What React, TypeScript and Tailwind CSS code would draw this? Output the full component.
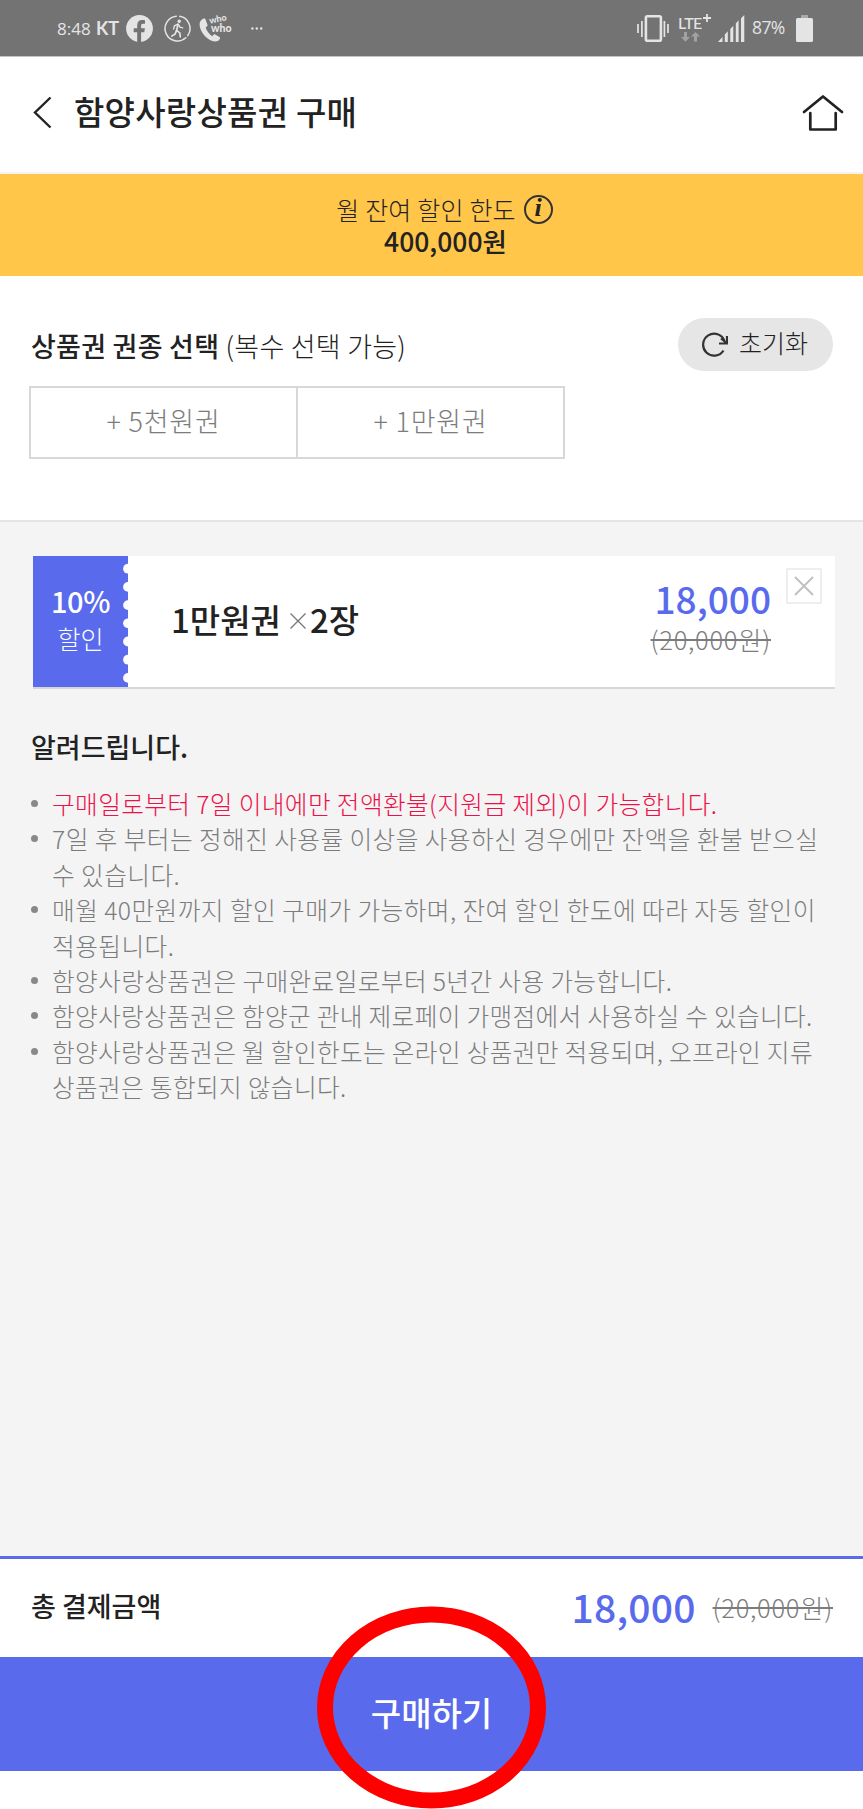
import type { ReactNode } from 'react';

type Notice = { lines: string[]; tracking: string; highlight?: boolean };

const notices: Notice[] = [
  { lines: ['구매일로부터 7일 이내에만 전액환불(지원금 제외)이 가능합니다.'], tracking: 'tracking-[0.36px]', highlight: true },
  { lines: ['7일 후 부터는 정해진 사용률 이상을 사용하신 경우에만 잔액을 환불 받으실', '수 있습니다.'], tracking: 'tracking-[0.42px]' },
  { lines: ['매월 40만원까지 할인 구매가 가능하며, 잔여 할인 한도에 따라 자동 할인이', '적용됩니다.'], tracking: 'tracking-[0.43px]' },
  { lines: ['함양사랑상품권은 구매완료일로부터 5년간 사용 가능합니다.'], tracking: 'tracking-[0.36px]' },
  { lines: ['함양사랑상품권은 함양군 관내 제로페이 가맹점에서 사용하실 수 있습니다.'], tracking: 'tracking-[0.31px]' },
  { lines: ['함양사랑상품권은 월 할인한도는 온라인 상품권만 적용되며, 오프라인 지류', '상품권은 통합되지 않습니다.'], tracking: 'tracking-[0.32px]' },
];

function StatusBar() {
  return (
    <div className="flex h-14 items-center bg-[#737373] pl-[57px] pr-[50px] text-[#e4e4e4]">
      <span className="w-[39px] whitespace-nowrap font-['Open_Sans',sans-serif] text-[17px] leading-none">8:48</span>
      <span className="w-[30px] font-['Lato',sans-serif] text-[18px] font-bold leading-none">KT</span>
      <svg width="27" height="27" viewBox="0 0 27 27" className="shrink-0">
        <circle cx="13.5" cy="13.5" r="13.4" fill="#e4e4e4" />
        <path d="M11.2 26.9v-9.6H7.7v-4h3.5v-3.1c0-3.3 2-5.1 4.9-5.1 1.4 0 2.5.2 2.9.3v3.4h-1.9c-1.6 0-2 .9-2 1.9v2.6h3.8l-.6 4h-3.2v9.6z" fill="#737373" />
      </svg>
      <svg width="27" height="27" viewBox="0 0 27 27" fill="none" stroke="#e4e4e4" strokeLinecap="round" className="ml-[11px] shrink-0">
        <path d="M15.8 1.3a12.4 12.4 0 0 1 8 19.3M21.8 22.7A12.4 12.4 0 1 1 12.2 1.2" strokeWidth="1.5" />
        <circle cx="15.2" cy="6.3" r="1.7" fill="#e4e4e4" stroke="none" />
        <path d="M14 9.3l-1.3 6 3.2 2.8.3 3.7M12.4 15.5l-1.2 3.4-3.4 2.2" strokeWidth="1.7" />
        <path d="M14 9.2l-3.6 1.6-.8 3.2M14.4 9.4l1.5 2.7 2.8.7" strokeWidth="1.3" />
      </svg>
      <div className="relative ml-2 h-[27px] w-8 shrink-0">
        <svg width="22" height="24" viewBox="0 0 22 24" className="absolute left-0 top-[3px]">
          <path d="M4.8.4C2 1.4.3 3.7.6 7c.6 8 8.3 15.8 15.2 16.5 2.6.2 4.6-1.1 5.2-3.3.2-.6 0-1-.5-1.3l-4.3-2.5c-.5-.3-1-.2-1.4.2l-1.6 1.6C10.3 16.5 7.5 12.8 6.7 9.6l1.5-1.5c.4-.4.5-.9.3-1.4L6.3 1C6 .5 5.4.2 4.8.4z" fill="#e4e4e4" />
        </svg>
        <span className="absolute left-[10px] top-[-1px] -rotate-12 font-['Lato',sans-serif] text-[9px] font-black leading-[9px]">who</span>
        <span className="absolute left-[12px] top-[8px] font-['Lato',sans-serif] text-[10.5px] font-black leading-[10px]">who</span>
      </div>
      <svg width="12" height="3" viewBox="0 0 12 3" fill="#e4e4e4" className="ml-5 shrink-0">
        <circle cx="1.4" cy="1.5" r="1.2" /><circle cx="5.8" cy="1.5" r="1.2" /><circle cx="10.2" cy="1.5" r="1.2" />
      </svg>
      <div className="ml-auto flex items-center">
        <svg width="32" height="27" viewBox="0 0 32 27" fill="none" stroke="#e4e4e4" className="shrink-0">
          <rect x="8.9" y="1.3" width="15" height="24.4" rx="1.5" strokeWidth="2.6" />
          <path d="M1 9v9M4.900 6v16M27.400 6v16M31 9v9" strokeWidth="1.7" />
        </svg>
        <div className="relative ml-[10px] h-[27px] w-8 shrink-0">
          <span className="absolute left-[-1px] top-0 font-['Lato',sans-serif] text-[16px] font-medium leading-none tracking-[-0.6px]">LTE</span>
          <svg width="8" height="8" viewBox="0 0 8 8" stroke="#e4e4e4" strokeWidth="1.8" className="absolute left-[24px] top-[-1px]">
            <path d="M4 0v8M0 4h8" />
          </svg>
          <svg width="19" height="10" viewBox="0 0 19 10" fill="#a2a2a2" className="absolute left-[2px] top-[17px]">
            <path d="M3 0h3v5h3L4.5 9.7 0 5h3zM13 9.5h3v-5h3L14.5 0 10 4.5h3z" />
          </svg>
        </div>
        <svg width="27" height="27" viewBox="0 0 27 27" fill="#e4e4e4" className="ml-[7px] shrink-0">
          <path d="M0 27l4.5-5v5zM6.8 27v-7.5l3-3.2V27zM12.3 27V14l3-3.2V27zM17.8 27V8.4l2.8-3.2V27zM23 27V3.2L26.3 0v27z" />
        </svg>
        <span className="ml-[7px] w-9 whitespace-nowrap font-['Open_Sans',sans-serif] text-[17.5px] leading-none tracking-[-0.6px]">87%</span>
        <svg width="17" height="27" viewBox="0 0 17 27" className="ml-2 shrink-0">
          <path d="M5 0h7v3H5z" fill="#aaa" /><rect y="3" width="17" height="24" rx="1.5" fill="#e4e4e4" />
        </svg>
      </div>
    </div>
  );
}

function TopBar() {
  return (
    <header className="flex h-[118px] items-center border-b-2 border-t border-b-[#f3f3f3] border-t-[#c4c4c4] bg-white pb-1 pl-[33px] pr-[19px]">
      <svg width="19" height="33" viewBox="0 0 19 33" fill="none" stroke="#222" strokeWidth="2.4" className="shrink-0">
        <path d="M17.5 1.5L2 16.5l15.5 15" />
      </svg>
      <h1 className="ml-[22px] pb-1 text-[33px] font-medium leading-[48px] tracking-[0.25px]">함양사랑상품권 구매</h1>
      <svg width="42" height="38" viewBox="0 0 42 38" fill="none" stroke="#222" strokeWidth="2.7" strokeLinecap="round" strokeLinejoin="round" className="ml-auto shrink-0">
        <path d="M2 18L21 2.5 40 18M8.3 19v16.5h25.4V19" />
      </svg>
    </header>
  );
}

function AmountButton({ children }: { children: ReactNode }) {
  return (
    <button className="-ml-[2px] h-[73px] w-[269px] border-2 border-[#d8d8d8] bg-white pb-[3px] text-[27px] font-light tracking-[0.8px] text-[#7c7c7c]">{children}</button>
  );
}

function Coupon() {
  return (
    <article className="ml-[33px] mr-[28px] mt-[34px] flex h-[133px] border-b-2 border-[#d6d6d6] bg-white">
      <div className="flex w-[95px] shrink-0 bg-[#596bec] text-white">
        <div className="flex flex-1 flex-col items-center pt-[24px]">
          <span className="text-[29px] font-medium leading-[40px] tracking-[-0.4px]">10%</span>
          <span className="text-[25px] font-light leading-[36px]">할인</span>
        </div>
        <svg width="5" height="131" viewBox="0 0 5 131" fill="#fff" className="-ml-[5px] shrink-0">
          {[12.7, 30.9, 49.1, 67.3, 85.5, 103.7, 121.9].map((y) => <circle key={y} cx="5" cy={y} r="4.9" />)}
        </svg>
      </div>
      <div className="flex flex-1 items-center pb-[6px] pl-[43px] text-[33px] font-medium leading-[48px]">
        <span>1만원권</span>
        <svg width="16" height="16" viewBox="0 0 16 16" stroke="#777" strokeWidth="1.3" className="ml-[9px] mr-[4px] mt-[5px]"><path d="M.5.5l15 15m0-15l-15 15" /></svg>
        <span>2장</span>
      </div>
      <div className="flex flex-col items-end pt-[16px]">
        <span className="text-[37px] font-medium leading-[52px] text-[#596bec]">18,000</span>
        <s className="text-[25.5px] font-light leading-[29px] tracking-[0.7px] text-[#7c7c7c] decoration-2">(20,000원)</s>
      </div>
      <button className="ml-[15px] mr-[13px] mt-3 flex h-9 w-9 items-center justify-center border-2 border-[#eee]">
        <svg width="20" height="20" viewBox="0 0 20 20" stroke="#bfbfbf" strokeWidth="1.8"><path d="M1 1l18 18M19 1L1 19" /></svg>
      </button>
    </article>
  );
}

export default function App() {
  return (
    <div className="flex h-[1809px] w-[863px] flex-col overflow-hidden bg-white font-['Noto_Sans_CJK_KR',sans-serif] text-[#222]">
      <StatusBar />
      <TopBar />
      <section className="flex h-[102px] flex-col items-center bg-[#ffc64a] pt-[17px]">
        <div className="ml-[26px] flex items-center text-[25px] font-light leading-[36px] tracking-[0.2px]">
          월 잔여 할인 한도
          <span className="ml-2 flex h-[29px] w-[29px] items-center justify-center rounded-full border-2 border-[#333] pb-[2px] font-['Liberation_Serif',serif] text-[26px] font-bold italic leading-none">i</span>
        </div>
        <strong className="ml-[28px] text-[26.5px] font-medium leading-[28px]">400,000원</strong>
      </section>
      <section className="h-[246px] shrink-0 border-b-2 border-[#e5e5e5] bg-white px-[30px] pt-[42px]">
        <div className="flex items-start justify-between">
          <h2 className="mt-[8px] pl-[1px] text-[27px] font-medium leading-[40px] tracking-[0.25px]">상품권 권종 선택 <span className="font-light">(복수 선택 가능)</span></h2>
          <button className="flex h-[53px] w-[155px] items-center rounded-full bg-[#e6e6e6] pl-[24px] text-[25px] font-light">
            <svg width="26" height="26" viewBox="0 0 26 26" fill="none" stroke="#333" strokeWidth="2.2" className="mr-[11px] shrink-0">
              <path d="M21.5 18.5A11 11 0 1 1 22.5 9" />
              <path d="M25 4v7.5h-8M24.5 11L19 6.5" />
            </svg>
            <span className="pb-1">초기화</span>
          </button>
        </div>
        <div className="mt-[15px] flex pl-[1px]">
          <AmountButton>+ 5천원권</AmountButton>
          <AmountButton>+ 1만원권</AmountButton>
        </div>
      </section>
      <main className="flex-1 bg-[#f4f4f4]">
        <Coupon />
        <h3 className="ml-[31px] mt-[36px] text-[27px] font-medium leading-[44px]">알려드립니다.</h3>
        <ul className="ml-[31px] mt-[17px] text-[24.7px] font-light leading-[35.4px] text-[#7c7c7c]">
          {notices.map((n) => (
            <li key={n.lines[0]} className={n.highlight ? 'flex text-[#ec1149]' : 'flex'}>
              <span className="mr-[14px] mt-[14px] h-[7px] w-[7px] shrink-0 rounded-full bg-[#888]" />
              <div className={n.tracking}>
                {n.lines.map((line) => <p key={line} className="whitespace-nowrap">{line}</p>)}
              </div>
            </li>
          ))}
        </ul>
      </main>
      <footer className="h-[253px] shrink-0">
        <div className="flex h-[101px] items-center border-t-[3px] border-[#596bec] bg-white pb-1 pl-[31px] pr-[30px]">
          <span className="text-[27px] font-medium">총 결제금액</span>
          <span className="ml-auto text-[39px] font-medium tracking-[0.2px] text-[#596bec]">18,000</span>
          <s className="ml-[17px] mt-[2px] text-[25.5px] font-light tracking-[0.7px] text-[#7c7c7c] decoration-2">(20,000원)</s>
        </div>
        <button className="relative flex h-[114px] w-full items-center justify-center bg-[#596bec] pb-[2px] text-[33px] font-medium text-white">
          구매하기
          <svg width="230" height="203" viewBox="0 0 230 203" fill="none" className="absolute left-[317px] top-[-51px]">
            <ellipse cx="114.5" cy="101.5" rx="106.5" ry="93" stroke="#f00" strokeWidth="16" />
          </svg>
        </button>
      </footer>
    </div>
  );
}
